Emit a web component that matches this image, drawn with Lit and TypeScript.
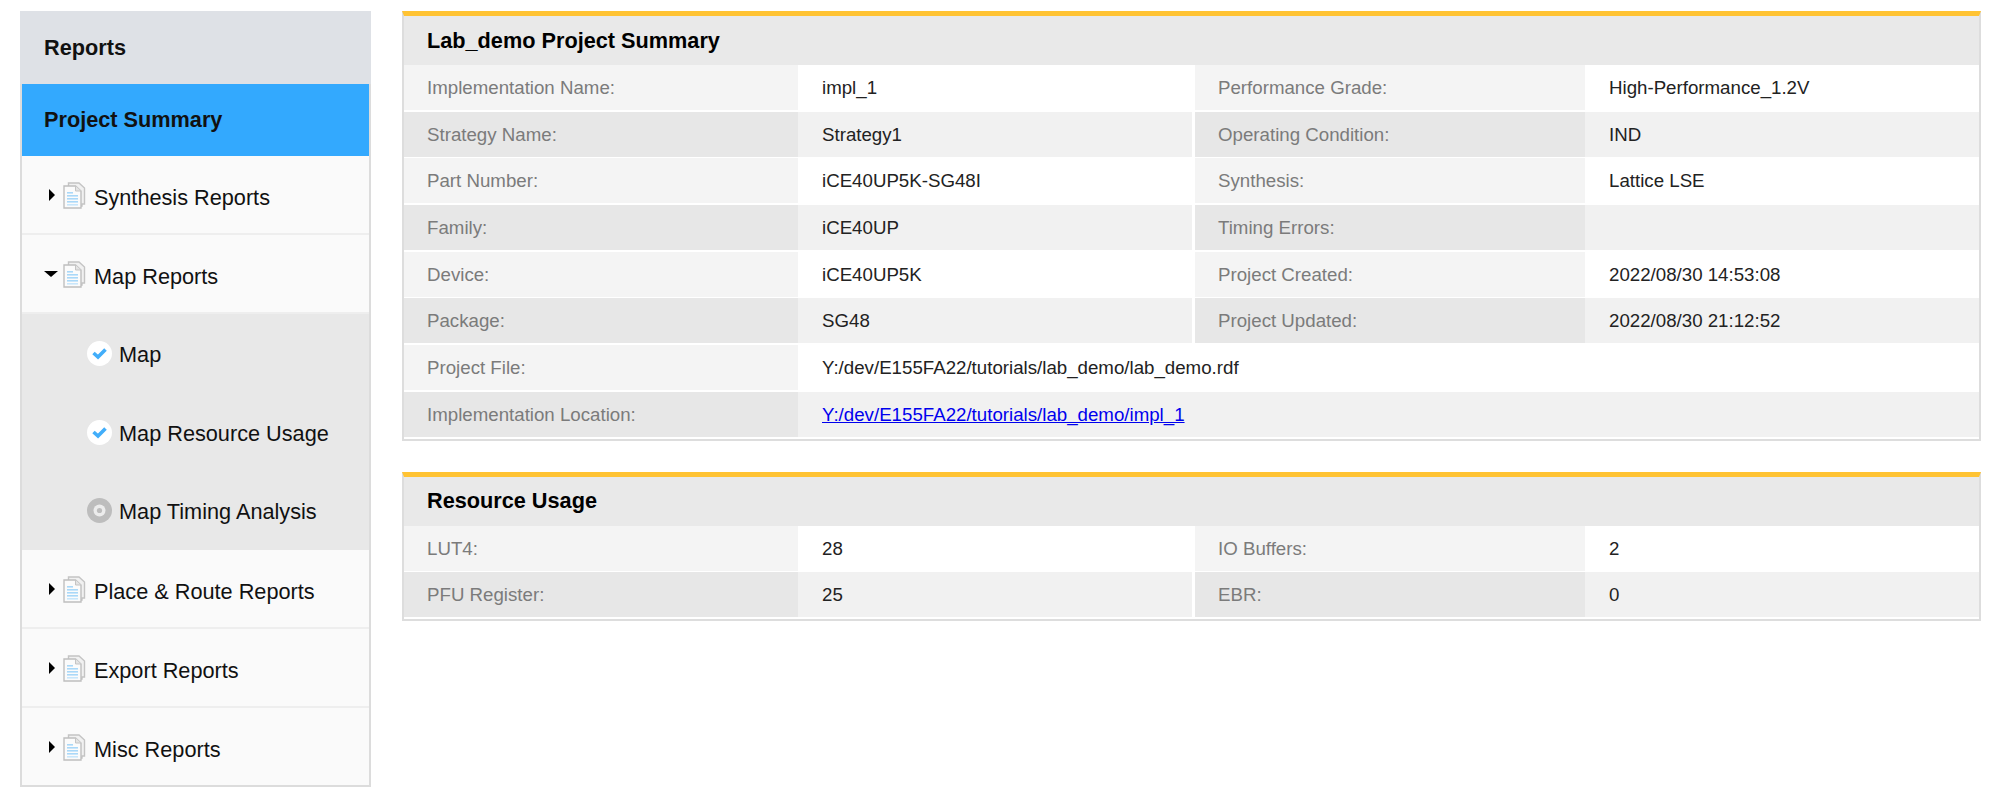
import { LitElement, html, css, svg } from "lit";
import { customElement } from "lit/decorators.js";

type Cell = [string, string];

const summaryRows: { left: Cell; right?: Cell; link?: boolean }[] = [
  { left: ["Implementation Name:", "impl_1"], right: ["Performance Grade:", "High-Performance_1.2V"] },
  { left: ["Strategy Name:", "Strategy1"], right: ["Operating Condition:", "IND"] },
  { left: ["Part Number:", "iCE40UP5K-SG48I"], right: ["Synthesis:", "Lattice LSE"] },
  { left: ["Family:", "iCE40UP"], right: ["Timing Errors:", ""] },
  { left: ["Device:", "iCE40UP5K"], right: ["Project Created:", "2022/08/30 14:53:08"] },
  { left: ["Package:", "SG48"], right: ["Project Updated:", "2022/08/30 21:12:52"] },
  { left: ["Project File:", "Y:/dev/E155FA22/tutorials/lab_demo/lab_demo.rdf"] },
  { left: ["Implementation Location:", "Y:/dev/E155FA22/tutorials/lab_demo/impl_1"], link: true },
];

const resourceRows: { left: Cell; right?: Cell; link?: boolean }[] = [
  { left: ["LUT4:", "28"], right: ["IO Buffers:", "2"] },
  { left: ["PFU Register:", "25"], right: ["EBR:", "0"] },
];

const docIcon = svg`<svg class="doc" width="24" height="27" viewBox="0 0 24 27">
  <path d="M6.5 1 H17 L22.5 6 V22 H20 V24 H6.5 Z" fill="#f1f1f1" stroke="#c4c4c4" stroke-width="1.4"/>
  <path d="M2 4 H13.5 L19 9 V26 H2 Z" fill="#fbfbfb" stroke="#bfbfbf" stroke-width="1.4"/>
  <path d="M13.5 4 V9 H19" fill="#e4e4e4" stroke="#c4c4c4" stroke-width="1"/>
  <rect x="5" y="10" width="6" height="1.6" fill="#a9d8f8"/>
  <rect x="5" y="13" width="11" height="1.6" fill="#a9d8f8"/>
  <rect x="5" y="16" width="11" height="1.6" fill="#a9d8f8"/>
  <rect x="5" y="19" width="11" height="1.6" fill="#a9d8f8"/>
  <rect x="5" y="22" width="11" height="1.6" fill="#c8e6fb"/>
</svg>`;

const doneIcon = svg`<svg class="status" width="25" height="25" viewBox="0 0 25 25">
  <circle cx="12.5" cy="12.5" r="12.5" fill="#ffffff"/>
  <path d="M6.5 12 L11 16 L18.5 8.5" fill="none" stroke="#42aefa" stroke-width="3.6"/>
</svg>`;

const pendingIcon = svg`<svg class="status" width="25" height="25" viewBox="0 0 25 25">
  <circle cx="12.5" cy="12.5" r="12.5" fill="#bdbdbd"/>
  <circle cx="12.5" cy="12.5" r="6" fill="#ececec"/>
  <circle cx="12.5" cy="12.5" r="2.6" fill="#bdbdbd"/>
</svg>`;

@customElement("app-root")
export class AppRoot extends LitElement {
  static styles = css`
    :host {
      display: block;
      width: 1999px;
      height: 803px;
      background: #fff;
      font-family: "Liberation Sans", Arial, sans-serif;
      color: #111;
      overflow: hidden;
    }

    .page {
      display: flex;
      align-items: flex-start;
      gap: 31px;
      padding: 11px 18px 0 20px;
    }

    .sidebar {
      width: 351px;
      flex: none;
      box-sizing: border-box;
      border: 2px solid #dcdcdc;
      border-top: none;
      background: #fafafa;
      font-size: 21.7px;
    }

    .side-title {
      height: 73px;
      margin: 0 -2px;
      padding-left: 24px;
      display: flex;
      align-items: center;
      background: #dee1e6;
      font-weight: bold;
    }

    .side-active {
      height: 72px;
      padding-left: 22px;
      display: flex;
      align-items: center;
      background: #33a9fe;
      font-weight: bold;
    }

    .group {
      height: 71px;
      padding: 6px 0 0 22px;
      display: flex;
      align-items: center;
      border-bottom: 2px solid #eeeeee;
    }

    .group:last-child {
      border-bottom: none;
    }

    .tri {
      width: 16px;
      flex: none;
      display: flex;
      justify-content: center;
      margin-top: -5px;
    }

    .tri.closed i {
      border-left: 6px solid #000;
      border-top: 6px solid transparent;
      border-bottom: 6px solid transparent;
    }

    .tri.open i {
      border-top: 6px solid #000;
      border-left: 7px solid transparent;
      border-right: 7px solid transparent;
      margin-left: -3px;
    }

    .doc {
      margin: -5px 8px 0 2px;
      flex: none;
    }

    .subs {
      background: #e8e8e8;
    }

    .sub {
      height: 75.7px;
      padding: 3px 0 0 65px;
      display: flex;
      align-items: center;
      gap: 7px;
    }

    .sub .status {
      margin-top: -3px;
    }

    .main {
      flex: 1;
      display: flex;
      flex-direction: column;
      gap: 31px;
    }

    .card {
      border: 2px solid #dddddd;
      border-top: 5px solid #ffc333;
      padding-bottom: 3px;
    }

    .card h2 {
      margin: 0;
      height: 49px;
      padding-left: 23px;
      display: flex;
      align-items: center;
      background: #e9e9e9;
      font-size: 21.7px;
      font-weight: bold;
      color: #000;
    }

    .row {
      display: grid;
      grid-template-columns: 394px 394px 393px 1fr;
      height: 43.7px;
      margin-bottom: 3px;
      font-size: 18.7px;
      color: #222;
      line-height: 45px;
    }

    .row:last-child {
      margin-bottom: 0;
    }

    .row > div {
      white-space: nowrap;
    }

    .label {
      padding-left: 23px;
      color: #7b7b7b;
      background: #f4f4f4;
    }

    .label.second {
      margin-left: 3px;
      padding-left: 23px;
    }

    .value {
      padding-left: 24px;
      background: #fff;
    }

    .row.even .label {
      background: #e7e7e7;
    }

    .row.even .value {
      background: #f1f1f1;
    }

    .value.wide {
      grid-column: 2 / 5;
    }

    a {
      color: #0000ee;
    }
  `;

  private renderGroup(name: string, open = false) {
    return html`<div class="group">
      <span class="tri ${open ? "open" : "closed"}"><i></i></span>
      ${docIcon}
      <span>${name}</span>
    </div>`;
  }

  private renderRows(rows: { left: Cell; right?: Cell; link?: boolean }[]) {
    return rows.map(
      (r, i) => html`<div class="row ${i % 2 ? "even" : ""}">
        <div class="label">${r.left[0]}</div>
        <div class="value ${r.right ? "" : "wide"}">
          ${r.link ? html`<a href="#">${r.left[1]}</a>` : r.left[1]}
        </div>
        ${r.right
          ? html`<div class="label second">${r.right[0]}</div>
              <div class="value">${r.right[1]}</div>`
          : null}
      </div>`
    );
  }

  render() {
    return html`<div class="page">
      <nav class="sidebar">
        <div class="side-title">Reports</div>
        <div class="side-active">Project Summary</div>
        ${this.renderGroup("Synthesis Reports")}
        ${this.renderGroup("Map Reports", true)}
        <div class="subs">
          <div class="sub">${doneIcon}<span>Map</span></div>
          <div class="sub">${doneIcon}<span>Map Resource Usage</span></div>
          <div class="sub">${pendingIcon}<span>Map Timing Analysis</span></div>
        </div>
        ${this.renderGroup("Place & Route Reports")}
        ${this.renderGroup("Export Reports")}
        ${this.renderGroup("Misc Reports")}
      </nav>
      <main class="main">
        <section class="card">
          <h2>Lab_demo Project Summary</h2>
          ${this.renderRows(summaryRows)}
        </section>
        <section class="card">
          <h2>Resource Usage</h2>
          ${this.renderRows(resourceRows)}
        </section>
      </main>
    </div>`;
  }
}
